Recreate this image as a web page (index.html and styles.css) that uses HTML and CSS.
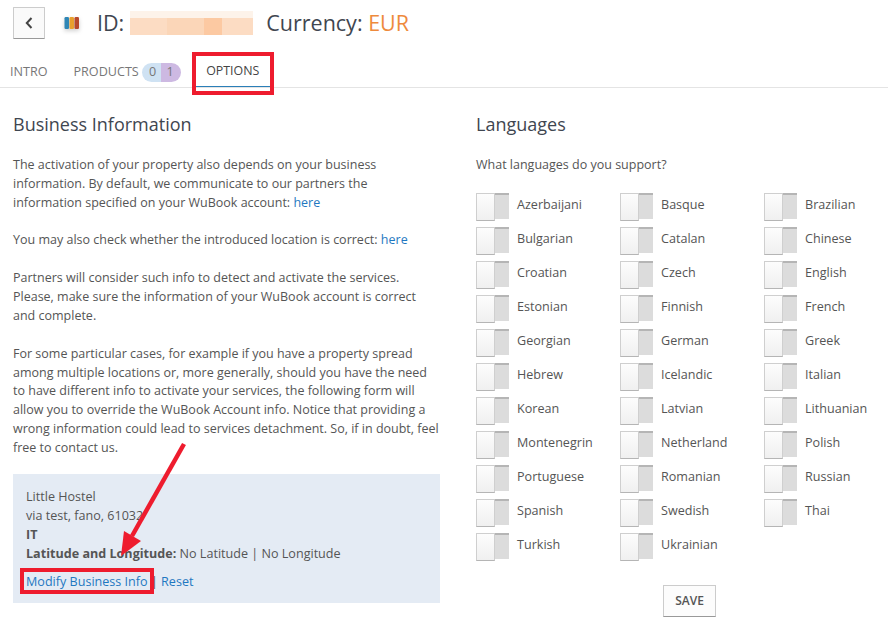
FILE: index.html
```html
<!DOCTYPE html>
<html lang="en">
<head>
<meta charset="utf-8">
<title>Options</title>
<link rel="stylesheet" href="styles.css">
</head>
<body>
<header class="top">
  <button class="back" aria-label="Back"><svg width="8" height="12" viewBox="0 0 8 12"><path d="M6.5 1 1.8 6l4.7 5" fill="none" stroke="#444" stroke-width="2"/></svg></button>
  <svg class="logo" width="18" height="18" viewBox="0 0 18 18"><rect x="1.500" y="3" width="4.500" height="12" rx="1.200" fill="#2f86b5"/><rect x="6.500" y="3" width="4.500" height="12" rx="1.200" fill="#e8a02e"/><rect x="11.500" y="3" width="4.500" height="12" rx="1.200" fill="#b8492c"/></svg>
  <h1 class="title">ID:</h1>
  <div class="masked"></div>
  <h1 class="title">Currency: <span class="eur">EUR</span></h1>
</header>
<nav class="tabs">
  <a class="tab">INTRO</a>
  <a class="tab products">PRODUCTS <span class="pill"><span class="p0">0</span><span class="p1">1</span></span></a>
  <a class="tab active">OPTIONS</a>
</nav>
<main class="cols">
  <section class="left">
    <h2>Business Information</h2>
    <p>The activation of your property also depends on your business information. By default, we communicate to our partners the information specified on your WuBook account: <a class="link">here</a></p>
    <p>You may also check whether the introduced location is correct: <a class="link">here</a></p>
    <p>Partners will consider such info to detect and activate the services. Please, make sure the information of your WuBook account is correct and complete.</p>
    <p>For some particular cases, for example if you have a property spread among multiple locations or, more generally, should you have the need to have different info to activate your services, the following form will allow you to override the WuBook Account info. Notice that providing a wrong information could lead to services detachment. So, if in doubt, feel free to contact us.</p>
    <div class="box">
      <div>Little Hostel</div>
      <div>via test, fano, 61032</div>
      <div><b>IT</b></div>
      <div><b>Latitude and Longitude:</b> No Latitude | No Longitude</div>
      <div class="actions"><a class="link">Modify Business Info</a> | <a class="link">Reset</a></div>
    </div>
  </section>
  <section class="right">
    <h2>Languages</h2>
    <p class="q">What languages do you support?</p>
    <div class="langs">
      <label class="lang"><span class="sw"></span>Azerbaijani</label>
      <label class="lang"><span class="sw"></span>Basque</label>
      <label class="lang"><span class="sw"></span>Brazilian</label>
      <label class="lang"><span class="sw"></span>Bulgarian</label>
      <label class="lang"><span class="sw"></span>Catalan</label>
      <label class="lang"><span class="sw"></span>Chinese</label>
      <label class="lang"><span class="sw"></span>Croatian</label>
      <label class="lang"><span class="sw"></span>Czech</label>
      <label class="lang"><span class="sw"></span>English</label>
      <label class="lang"><span class="sw"></span>Estonian</label>
      <label class="lang"><span class="sw"></span>Finnish</label>
      <label class="lang"><span class="sw"></span>French</label>
      <label class="lang"><span class="sw"></span>Georgian</label>
      <label class="lang"><span class="sw"></span>German</label>
      <label class="lang"><span class="sw"></span>Greek</label>
      <label class="lang"><span class="sw"></span>Hebrew</label>
      <label class="lang"><span class="sw"></span>Icelandic</label>
      <label class="lang"><span class="sw"></span>Italian</label>
      <label class="lang"><span class="sw"></span>Korean</label>
      <label class="lang"><span class="sw"></span>Latvian</label>
      <label class="lang"><span class="sw"></span>Lithuanian</label>
      <label class="lang"><span class="sw"></span>Montenegrin</label>
      <label class="lang"><span class="sw"></span>Netherland</label>
      <label class="lang"><span class="sw"></span>Polish</label>
      <label class="lang"><span class="sw"></span>Portuguese</label>
      <label class="lang"><span class="sw"></span>Romanian</label>
      <label class="lang"><span class="sw"></span>Russian</label>
      <label class="lang"><span class="sw"></span>Spanish</label>
      <label class="lang"><span class="sw"></span>Swedish</label>
      <label class="lang"><span class="sw"></span>Thai</label>
      <label class="lang"><span class="sw"></span>Turkish</label>
      <label class="lang"><span class="sw"></span>Ukrainian</label>
    </div>
    <div class="save-row"><button class="save">SAVE</button></div>
  </section>
</main>
<div class="mark mark-tab"></div>
<div class="mark mark-link"></div>
<svg class="arrow" width="888" height="627" viewBox="0 0 888 627"><path d="M184 444 132 536" stroke="#ee1c2e" stroke-width="4.5" fill="none"/><path d="M121 556 124 531 141 541Z" fill="#ee1c2e"/></svg>
</body>
</html>
```
FILE: styles.css
```css
* { box-sizing: border-box; }
html, body { margin: 0; padding: 0; }
body {
  width: 888px;
  height: 627px;
  overflow: hidden;
  position: relative;
  background: #fff;
  color: #555;
  font-family: "Open Sans", "Noto Sans", sans-serif;
  font-size: 12.58px;
  line-height: 18.87px;
}
.top {
  display: flex;
  align-items: center;
  height: 54px;
  padding: 0 0 9px 13px;
}
.back {
  width: 32px;
  height: 32px;
  padding: 0;
  display: flex;
  align-items: center;
  justify-content: center;
  background: #fafafa;
  border: 1px solid #ccc;
  border-bottom-color: #999;
  border-radius: 1px;
}
.logo { margin-left: 18px; margin-right: 16px; filter: drop-shadow(0 2px 2px rgba(0,0,0,.2)); }
.title {
  margin: 0;
  font-size: 21.5px;
  font-weight: 400;
  line-height: 30px;
  color: #3f4650;
}
.eur { color: #ee8a3c; }
.masked {
  width: 123px;
  height: 24px;
  margin: 0 13px 0 6px;
  background:
    linear-gradient(#fdf3ea 0 30%, rgba(253,243,234,0) 30%),
    linear-gradient(90deg, #fcdcc3 0 30%, #fbd6b8 30% 60%, #fcc9a2 60% 75%, #fcdcc3 75% 100%);
}
.tabs {
  display: flex;
  height: 34px;
  padding-left: 10px;
  border-bottom: 1px solid #e4e4e4;
  font-size: 12.6px;
  color: #777;
}
.tab {
  display: flex;
  align-items: center;
  height: 34px;
  padding-top: 3px;
}
.products { margin-left: 26px; gap: 3px; }
.pill { display: flex; height: 19px; width: 39px; border-radius: 10px; overflow: hidden; }
.p0 { flex: 1; background: #cfe2f3; text-align: center; padding-left: 2px; }
.p1 { flex: 1; background: #cdb9e2; text-align: center; padding-right: 2px; }
.active {
  margin-left: 15px;
  width: 74px;
  justify-content: center;
  color: #444;
  height: 33px;
  font-size: 12.4px;
  border-bottom: 1px solid #2a7fb8;
}
.cols {
  display: flex;
  padding: 22px 0 0 13px;
}
.left { width: 427px; }
.right { width: 399px; margin-left: 36px; }
h2 {
  margin: 0 0 17px;
  font-size: 18px;
  font-weight: 400;
  line-height: 29px;
  color: #3f4650;
}
p { margin: 0 0 18.87px; }
.left p { font-size: 12.5px; max-width: 426px; }
.left p:last-of-type { margin-bottom: 16px; }
.link { color: #1f78c1; }
.box {
  height: 129px;
  padding: 14px 13px 13px;
  background: #e4ebf4;
}
.box b { font-weight: 700; }
.actions { margin-top: 10px; }
.q { font-size: 12.5px; margin-bottom: 14px; }
.langs {
  display: grid;
  grid-template-columns: repeat(3, 144px);
  grid-auto-rows: 34px;
}
.lang { display: flex; align-items: center; gap: 8px; }
.sw {
  display: flex;
  width: 33px;
  height: 26px;
  flex: none;
  background: #dcdcdc;
  box-shadow: inset 0 2px 0 #b5b5b5;
}
.sw::before {
  content: "";
  width: 17px;
  height: 100%;
  background: linear-gradient(#fdfdfd, #f0f0f0);
  border: 1px solid #cfcfcf;
  border-bottom-color: #b5b5b5;
}
.save-row { display: flex; padding: 22px 0 0 187px; }
.save {
  width: 53px;
  height: 32px;
  padding: 0;
  background: #fcfcfc;
  border: 1px solid #ccc;
  border-bottom-color: #999;
  font: 600 12px "Open Sans", sans-serif;
  color: #555;
}
.mark { position: absolute; border: 4px solid #ee1c2e; }
.mark-tab { left: 192px; top: 52px; width: 82px; height: 43px; }
.mark-link { left: 20px; top: 568px; width: 134px; height: 26px; }
.arrow { position: absolute; left: 0; top: 0; pointer-events: none; }
```
